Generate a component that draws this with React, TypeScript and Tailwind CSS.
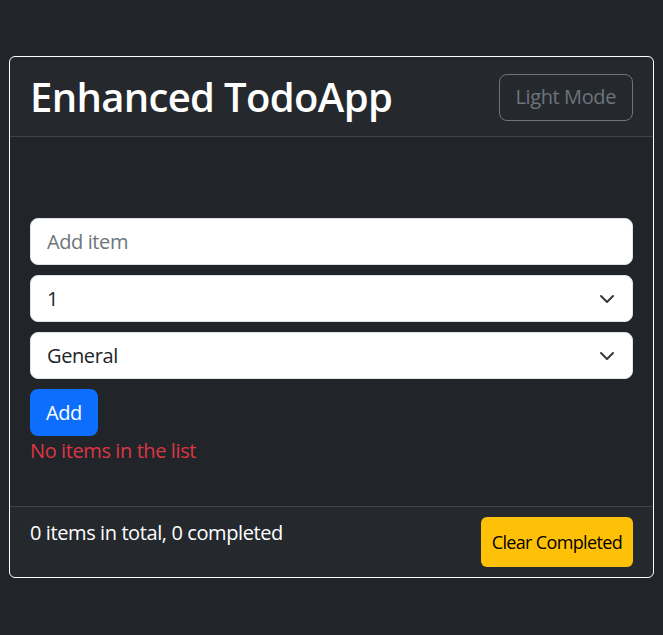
import React from "react";

const font = { fontFamily: '"Open Sans", "Noto Sans", sans-serif' };

function Chevron() {
  return (
    <svg width="16" height="16" viewBox="0 0 16 16" className="pointer-events-none absolute right-[18px] top-1/2 -translate-y-1/2">
      <path fill="none" stroke="#343a40" strokeLinecap="round" strokeLinejoin="round" strokeWidth="2" d="m2 5 6 6 6-6" />
    </svg>
  );
}

export default function App() {
  return (
    <div className="min-h-screen bg-[#212529] px-[9px] pt-[56px] text-white tracking-[-0.4px]" style={font}>
      <div className="rounded-md border border-white bg-[#212529]">
        <div className="flex items-center justify-between border-b border-white/[0.12] bg-white/[0.02] px-5 pb-[15px] pt-4">
          <h1 className="text-[40px] font-semibold leading-[48px] tracking-[-0.65px]">Enhanced TodoApp</h1>
          <button className="h-[47px] rounded-lg border border-[#6c757d] px-4 text-[20px] leading-[30px] text-[#6c757d]">
            Light Mode
          </button>
        </div>
        <div className="px-5 pb-10 pt-[81px]">
          <div className="flex flex-col gap-[10px]">
            <input
              placeholder="Add item"
              className="h-[47px] w-full rounded-lg border border-[#dee2e6] bg-white px-4 text-[20px] tracking-[-0.4px] text-[#212529] outline-none placeholder:text-[#6c757d]"
            />
            <div className="relative">
              <div className="flex h-[47px] w-full items-center rounded-lg border border-[#dee2e6] bg-white px-4 text-[20px] text-[#212529]">1</div>
              <Chevron />
            </div>
            <div className="relative">
              <div className="flex h-[47px] w-full items-center rounded-lg border border-[#dee2e6] bg-white px-4 text-[20px] text-[#212529]">General</div>
              <Chevron />
            </div>
            <div>
              <button className="h-[47px] rounded-lg bg-[#0d6efd] px-4 text-[20px] leading-[30px] text-white">Add</button>
            </div>
          </div>
          <p className="text-[20px] leading-[30px] text-[#dc3545]">No items in the list</p>
        </div>
        <div className="flex items-start justify-between border-t border-white/[0.12] bg-white/[0.02] px-5 py-[10px]">
          <p className="pt-[1px] text-[20px] leading-[30px]">0 items in total, 0 completed</p>
          <button className="h-[50px] rounded-md bg-[#ffc107] px-[11px] text-[18px] leading-[27px] tracking-[-0.65px] text-black">Clear Completed</button>
        </div>
      </div>
    </div>
  );
}
